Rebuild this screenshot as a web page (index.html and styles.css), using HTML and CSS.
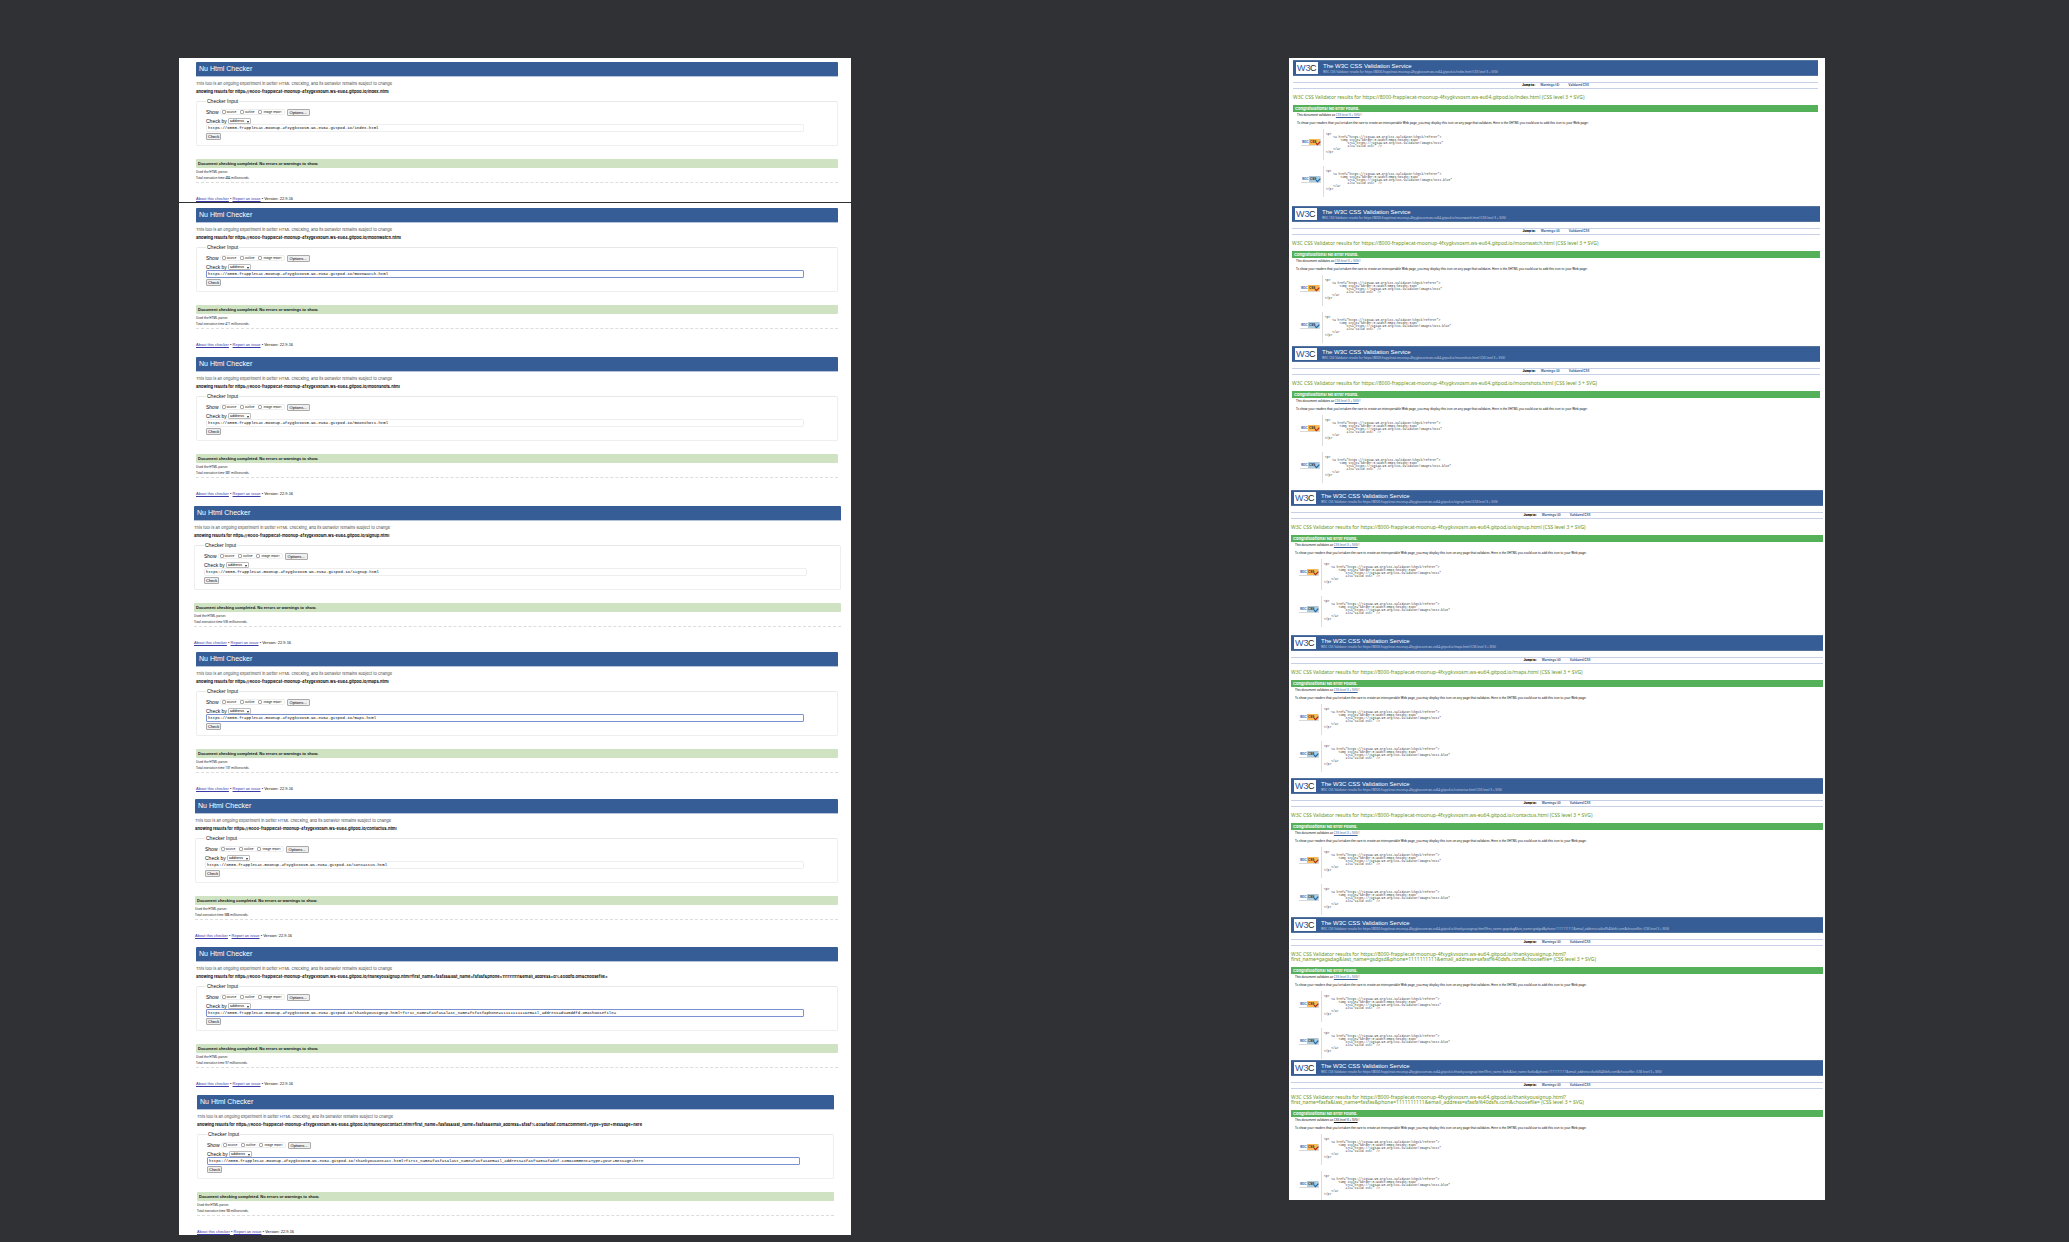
FILE: index.html
```html
<!DOCTYPE html>
<html lang="en">
<head>
<meta charset="utf-8">
<title>Validation results</title>
<link rel="stylesheet" href="styles.css">
</head>
<body>
<svg class="defs" aria-hidden="true">
  <symbol id="w3c" viewBox="0 0 22 12">
    <rect width="22" height="12" fill="#fff"/>
    <text x="1" y="9" class="logo-blue">W3</text>
    <text x="14" y="9" class="logo-dark">C</text>
  </symbol>
  <symbol id="badge-gold" viewBox="0 0 20 7">
    <rect width="20" height="7" fill="#d9d9d9"/>
    <rect width="19" height="6" fill="#fff"/>
    <rect x="8" width="11" height="6" fill="#fdb94f"/>
    <text x="1" y="4" class="badge-w3c">W3C</text>
    <text x="9" y="4" class="badge-css">CSS</text>
    <path d="M15 4.2l1.4 1.5L19.4 2.6" stroke="#b3261a" stroke-width="1.2" fill="none"/>
  </symbol>
  <symbol id="badge-blue" viewBox="0 0 20 7">
    <rect width="20" height="7" fill="#d9d9d9"/>
    <rect width="19" height="6" fill="#fff"/>
    <rect x="8" width="11" height="6" fill="#a9cbe0"/>
    <text x="1" y="4" class="badge-w3c">W3C</text>
    <text x="9" y="4" class="badge-css">CSS</text>
    <path d="M15 4.2l1.4 1.5L19.4 2.6" stroke="#1769ad" stroke-width="1.2" fill="none"/>
  </symbol>
</svg>
<main class="board">
<section class="panel html-panel" aria-label="HTML checks">

<article class="nu ruled">
  <h1>Nu Html Checker</h1>
  <p class="tagline">This tool is an ongoing experiment in better HTML checking, and its behavior remains subject to change</p>
  <h2>Showing results for https://8000-frapplecat-moonup-4fxygkvxosm.ws-eu64.gitpod.io/index.html</h2>
  <fieldset><legend>Checker Input</legend>
    <div class="show">Show <span class="options"><label><input type="checkbox">source</label><label><input type="checkbox">outline</label><label><input type="checkbox">image report</label></span><button type="button">Options...</button></div>
    <div class="by"><label for="by1">Check by</label><span class="picker"><select id="by1"><option>address</option></select></span></div>
    <input class="url" type="text" aria-label="Address" value="https://8000-frapplecat-moonup-4fxygkvxosm.ws-eu64.gitpod.io/index.html">
    <button type="button">Check</button>
  </fieldset>
  <p class="success">Document checking completed. No errors or warnings to show.</p>
  <div class="stats"><p>Used the HTML parser.</p><p>Total execution time 484 milliseconds.</p></div>
  <footer><a href="#about">About this checker</a> • <a href="#issue">Report an issue</a> • Version: 22.9.16</footer>
</article>

<article class="nu after-9">
  <h1>Nu Html Checker</h1>
  <p class="tagline">This tool is an ongoing experiment in better HTML checking, and its behavior remains subject to change</p>
  <h2>Showing results for https://8000-frapplecat-moonup-4fxygkvxosm.ws-eu64.gitpod.io/moonwatch.html</h2>
  <fieldset><legend>Checker Input</legend>
    <div class="show">Show <span class="options"><label><input type="checkbox">source</label><label><input type="checkbox">outline</label><label><input type="checkbox">image report</label></span><button type="button">Options...</button></div>
    <div class="by"><label for="by2">Check by</label><span class="picker"><select id="by2"><option>address</option></select></span></div>
    <input class="url active" type="text" aria-label="Address" value="https://8000-frapplecat-moonup-4fxygkvxosm.ws-eu64.gitpod.io/moonwatch.html">
    <button type="button">Check</button>
  </fieldset>
  <p class="success">Document checking completed. No errors or warnings to show.</p>
  <div class="stats"><p>Used the HTML parser.</p><p>Total execution time 411 milliseconds.</p></div>
  <footer><a href="#about">About this checker</a> • <a href="#issue">Report an issue</a> • Version: 22.9.16</footer>
</article>

<article class="nu after-9">
  <h1>Nu Html Checker</h1>
  <p class="tagline">This tool is an ongoing experiment in better HTML checking, and its behavior remains subject to change</p>
  <h2>Showing results for https://8000-frapplecat-moonup-4fxygkvxosm.ws-eu64.gitpod.io/moonshots.html</h2>
  <fieldset><legend>Checker Input</legend>
    <div class="show">Show <span class="options"><label><input type="checkbox">source</label><label><input type="checkbox">outline</label><label><input type="checkbox">image report</label></span><button type="button">Options...</button></div>
    <div class="by"><label for="by3">Check by</label><span class="picker"><select id="by3"><option>address</option></select></span></div>
    <input class="url" type="text" aria-label="Address" value="https://8000-frapplecat-moonup-4fxygkvxosm.ws-eu64.gitpod.io/moonshots.html">
    <button type="button">Check</button>
  </fieldset>
  <p class="success">Document checking completed. No errors or warnings to show.</p>
  <div class="stats"><p>Used the HTML parser.</p><p>Total execution time 381 milliseconds.</p></div>
  <footer><a href="#about">About this checker</a> • <a href="#issue">Report an issue</a> • Version: 22.9.16</footer>
</article>

<article class="nu wide">
  <h1>Nu Html Checker</h1>
  <p class="tagline">This tool is an ongoing experiment in better HTML checking, and its behavior remains subject to change</p>
  <h2>Showing results for https://8000-frapplecat-moonup-4fxygkvxosm.ws-eu64.gitpod.io/signup.html</h2>
  <fieldset><legend>Checker Input</legend>
    <div class="show">Show <span class="options"><label><input type="checkbox">source</label><label><input type="checkbox">outline</label><label><input type="checkbox">image report</label></span><button type="button">Options...</button></div>
    <div class="by"><label for="by4">Check by</label><span class="picker"><select id="by4"><option>address</option></select></span></div>
    <input class="url" type="text" aria-label="Address" value="https://8000-frapplecat-moonup-4fxygkvxosm.ws-eu64.gitpod.io/signup.html">
    <button type="button">Check</button>
  </fieldset>
  <p class="success">Document checking completed. No errors or warnings to show.</p>
  <div class="stats"><p>Used the HTML parser.</p><p>Total execution time 535 milliseconds.</p></div>
  <footer><a href="#about">About this checker</a> • <a href="#issue">Report an issue</a> • Version: 22.9.16</footer>
</article>

<article class="nu after-7">
  <h1>Nu Html Checker</h1>
  <p class="tagline">This tool is an ongoing experiment in better HTML checking, and its behavior remains subject to change</p>
  <h2>Showing results for https://8000-frapplecat-moonup-4fxygkvxosm.ws-eu64.gitpod.io/maps.html</h2>
  <fieldset><legend>Checker Input</legend>
    <div class="show">Show <span class="options"><label><input type="checkbox">source</label><label><input type="checkbox">outline</label><label><input type="checkbox">image report</label></span><button type="button">Options...</button></div>
    <div class="by"><label for="by5">Check by</label><span class="picker"><select id="by5"><option>address</option></select></span></div>
    <input class="url active" type="text" aria-label="Address" value="https://8000-frapplecat-moonup-4fxygkvxosm.ws-eu64.gitpod.io/maps.html">
    <button type="button">Check</button>
  </fieldset>
  <p class="success">Document checking completed. No errors or warnings to show.</p>
  <div class="stats"><p>Used the HTML parser.</p><p>Total execution time 137 milliseconds.</p></div>
  <footer><a href="#about">About this checker</a> • <a href="#issue">Report an issue</a> • Version: 22.9.16</footer>
</article>

<article class="nu after-8 semi-wide">
  <h1>Nu Html Checker</h1>
  <p class="tagline">This tool is an ongoing experiment in better HTML checking, and its behavior remains subject to change</p>
  <h2>Showing results for https://8000-frapplecat-moonup-4fxygkvxosm.ws-eu64.gitpod.io/contactus.html</h2>
  <fieldset><legend>Checker Input</legend>
    <div class="show">Show <span class="options"><label><input type="checkbox">source</label><label><input type="checkbox">outline</label><label><input type="checkbox">image report</label></span><button type="button">Options...</button></div>
    <div class="by"><label for="by6">Check by</label><span class="picker"><select id="by6"><option>address</option></select></span></div>
    <input class="url" type="text" aria-label="Address" value="https://8000-frapplecat-moonup-4fxygkvxosm.ws-eu64.gitpod.io/contactus.html">
    <button type="button">Check</button>
  </fieldset>
  <p class="success">Document checking completed. No errors or warnings to show.</p>
  <div class="stats"><p>Used the HTML parser.</p><p>Total execution time 388 milliseconds.</p></div>
  <footer><a href="#about">About this checker</a> • <a href="#issue">Report an issue</a> • Version: 22.9.16</footer>
</article>

<article class="nu after-8">
  <h1>Nu Html Checker</h1>
  <p class="tagline">This tool is an ongoing experiment in better HTML checking, and its behavior remains subject to change</p>
  <h2>Showing results for https://8000-frapplecat-moonup-4fxygkvxosm.ws-eu64.gitpod.io/thankyousignup.html?first_name=fasfas&amp;last_name=fsfasf&amp;phone=1111111111&amp;email_address=d%40ddfd.om&amp;choosefile=</h2>
  <fieldset><legend>Checker Input</legend>
    <div class="show">Show <span class="options"><label><input type="checkbox">source</label><label><input type="checkbox">outline</label><label><input type="checkbox">image report</label></span><button type="button">Options...</button></div>
    <div class="by"><label for="by7">Check by</label><span class="picker"><select id="by7"><option>address</option></select></span></div>
    <input class="url active" type="text" aria-label="Address" value="https://8000-frapplecat-moonup-4fxygkvxosm.ws-eu64.gitpod.io/thankyousignup.html?first_name=fasfas&amp;last_name=fsfasf&amp;phone=1111111111&amp;email_address=d%40ddfd.om&amp;choosefile=">
    <button type="button">Check</button>
  </fieldset>
  <p class="success">Document checking completed. No errors or warnings to show.</p>
  <div class="stats"><p>Used the HTML parser.</p><p>Total execution time 97 milliseconds.</p></div>
  <footer><a href="#about">About this checker</a> • <a href="#issue">Report an issue</a> • Version: 22.9.16</footer>
</article>

<article class="nu last narrow">
  <h1>Nu Html Checker</h1>
  <p class="tagline">This tool is an ongoing experiment in better HTML checking, and its behavior remains subject to change</p>
  <h2>Showing results for https://8000-frapplecat-moonup-4fxygkvxosm.ws-eu64.gitpod.io/thankyoucontact.html?first_name=fasfas&amp;last_name=fasfas&amp;email_address=sfasf%40safadsf.com&amp;comment=Type+your+message+here</h2>
  <fieldset><legend>Checker Input</legend>
    <div class="show">Show <span class="options"><label><input type="checkbox">source</label><label><input type="checkbox">outline</label><label><input type="checkbox">image report</label></span><button type="button">Options...</button></div>
    <div class="by"><label for="by8">Check by</label><span class="picker"><select id="by8"><option>address</option></select></span></div>
    <input class="url active" type="text" aria-label="Address" value="https://8000-frapplecat-moonup-4fxygkvxosm.ws-eu64.gitpod.io/thankyoucontact.html?first_name=fasfas&amp;last_name=fasfas&amp;email_address=sfasf%40safadsf.com&amp;comment=Type+your+message+here">
    <button type="button">Check</button>
  </fieldset>
  <p class="success">Document checking completed. No errors or warnings to show.</p>
  <div class="stats"><p>Used the HTML parser.</p><p>Total execution time 98 milliseconds.</p></div>
  <footer><a href="#about">About this checker</a> • <a href="#issue">Report an issue</a> • Version: 22.9.16</footer>
</article>
</section>

<section class="panel css-panel" aria-label="CSS checks">

<article class="css inset after-9">
  <header><svg class="logo" role="img" aria-label="W3C"><use href="#w3c"/></svg><div><h1>The W3C CSS Validation Service</h1><p>W3C CSS Validator results for https://8000-frapplecat-moonup-4fxygkvxosm.ws-eu64.gitpod.io/index.html (CSS level 3 + SVG)</p></div></header>
  <nav><b>Jump to:</b><a href="#warnings">Warnings (4)</a><a href="#css">Validated CSS</a></nav>
  <h2>W3C CSS Validator results for https://8000-frapplecat-moonup-4fxygkvxosm.ws-eu64.gitpod.io/index.html (CSS level 3 + SVG)</h2>
  <h3>Congratulations! No Error Found.</h3>
  <p class="note">This document validates as <a href="#level">CSS level 3 + SVG</a> !</p>
  <p class="note intro">To show your readers that you've taken the care to create an interoperable Web page, you may display this icon on any page that validates. Here is the XHTML you could use to add this icon to your Web page:</p>
  <div class="snippet"><svg class="badge" role="img" aria-label="Valid CSS"><use href="#badge-gold"/></svg><pre>&lt;p&gt;
    &lt;a href="https://jigsaw.w3.org/css-validator/check/referer"&gt;
        &lt;img style="border:0;width:88px;height:31px"
            src="https://jigsaw.w3.org/css-validator/images/vcss"
            alt="Valid CSS!" /&gt;
    &lt;/a&gt;
&lt;/p&gt;</pre></div>
  <div class="snippet"><svg class="badge" role="img" aria-label="Valid CSS"><use href="#badge-blue"/></svg><pre>&lt;p&gt;
    &lt;a href="https://jigsaw.w3.org/css-validator/check/referer"&gt;
        &lt;img style="border:0;width:88px;height:31px"
            src="https://jigsaw.w3.org/css-validator/images/vcss-blue"
            alt="Valid CSS!" /&gt;
    &lt;/a&gt;
&lt;/p&gt;</pre></div>
</article>

<article class="css semi-inset after-3">
  <header><svg class="logo" role="img" aria-label="W3C"><use href="#w3c"/></svg><div><h1>The W3C CSS Validation Service</h1><p>W3C CSS Validator results for https://8000-frapplecat-moonup-4fxygkvxosm.ws-eu64.gitpod.io/moonwatch.html (CSS level 3 + SVG)</p></div></header>
  <nav><b>Jump to:</b><a href="#warnings">Warnings (4)</a><a href="#css">Validated CSS</a></nav>
  <h2>W3C CSS Validator results for https://8000-frapplecat-moonup-4fxygkvxosm.ws-eu64.gitpod.io/moonwatch.html (CSS level 3 + SVG)</h2>
  <h3>Congratulations! No Error Found.</h3>
  <p class="note">This document validates as <a href="#level">CSS level 3 + SVG</a> !</p>
  <p class="note intro">To show your readers that you've taken the care to create an interoperable Web page, you may display this icon on any page that validates. Here is the XHTML you could use to add this icon to your Web page:</p>
  <div class="snippet"><svg class="badge" role="img" aria-label="Valid CSS"><use href="#badge-gold"/></svg><pre>&lt;p&gt;
    &lt;a href="https://jigsaw.w3.org/css-validator/check/referer"&gt;
        &lt;img style="border:0;width:88px;height:31px"
            src="https://jigsaw.w3.org/css-validator/images/vcss"
            alt="Valid CSS!" /&gt;
    &lt;/a&gt;
&lt;/p&gt;</pre></div>
  <div class="snippet"><svg class="badge" role="img" aria-label="Valid CSS"><use href="#badge-blue"/></svg><pre>&lt;p&gt;
    &lt;a href="https://jigsaw.w3.org/css-validator/check/referer"&gt;
        &lt;img style="border:0;width:88px;height:31px"
            src="https://jigsaw.w3.org/css-validator/images/vcss-blue"
            alt="Valid CSS!" /&gt;
    &lt;/a&gt;
&lt;/p&gt;</pre></div>
</article>

<article class="css semi-inset after-7">
  <header><svg class="logo" role="img" aria-label="W3C"><use href="#w3c"/></svg><div><h1>The W3C CSS Validation Service</h1><p>W3C CSS Validator results for https://8000-frapplecat-moonup-4fxygkvxosm.ws-eu64.gitpod.io/moonshots.html (CSS level 3 + SVG)</p></div></header>
  <nav><b>Jump to:</b><a href="#warnings">Warnings (4)</a><a href="#css">Validated CSS</a></nav>
  <h2>W3C CSS Validator results for https://8000-frapplecat-moonup-4fxygkvxosm.ws-eu64.gitpod.io/moonshots.html (CSS level 3 + SVG)</h2>
  <h3>Congratulations! No Error Found.</h3>
  <p class="note">This document validates as <a href="#level">CSS level 3 + SVG</a> !</p>
  <p class="note intro">To show your readers that you've taken the care to create an interoperable Web page, you may display this icon on any page that validates. Here is the XHTML you could use to add this icon to your Web page:</p>
  <div class="snippet"><svg class="badge" role="img" aria-label="Valid CSS"><use href="#badge-gold"/></svg><pre>&lt;p&gt;
    &lt;a href="https://jigsaw.w3.org/css-validator/check/referer"&gt;
        &lt;img style="border:0;width:88px;height:31px"
            src="https://jigsaw.w3.org/css-validator/images/vcss"
            alt="Valid CSS!" /&gt;
    &lt;/a&gt;
&lt;/p&gt;</pre></div>
  <div class="snippet"><svg class="badge" role="img" aria-label="Valid CSS"><use href="#badge-blue"/></svg><pre>&lt;p&gt;
    &lt;a href="https://jigsaw.w3.org/css-validator/check/referer"&gt;
        &lt;img style="border:0;width:88px;height:31px"
            src="https://jigsaw.w3.org/css-validator/images/vcss-blue"
            alt="Valid CSS!" /&gt;
    &lt;/a&gt;
&lt;/p&gt;</pre></div>
</article>

<article class="css after-8">
  <header><svg class="logo" role="img" aria-label="W3C"><use href="#w3c"/></svg><div><h1>The W3C CSS Validation Service</h1><p>W3C CSS Validator results for https://8000-frapplecat-moonup-4fxygkvxosm.ws-eu64.gitpod.io/signup.html (CSS level 3 + SVG)</p></div></header>
  <nav><b>Jump to:</b><a href="#warnings">Warnings (4)</a><a href="#css">Validated CSS</a></nav>
  <h2>W3C CSS Validator results for https://8000-frapplecat-moonup-4fxygkvxosm.ws-eu64.gitpod.io/signup.html (CSS level 3 + SVG)</h2>
  <h3>Congratulations! No Error Found.</h3>
  <p class="note">This document validates as <a href="#level">CSS level 3 + SVG</a> !</p>
  <p class="note intro">To show your readers that you've taken the care to create an interoperable Web page, you may display this icon on any page that validates. Here is the XHTML you could use to add this icon to your Web page:</p>
  <div class="snippet"><svg class="badge" role="img" aria-label="Valid CSS"><use href="#badge-gold"/></svg><pre>&lt;p&gt;
    &lt;a href="https://jigsaw.w3.org/css-validator/check/referer"&gt;
        &lt;img style="border:0;width:88px;height:31px"
            src="https://jigsaw.w3.org/css-validator/images/vcss"
            alt="Valid CSS!" /&gt;
    &lt;/a&gt;
&lt;/p&gt;</pre></div>
  <div class="snippet"><svg class="badge" role="img" aria-label="Valid CSS"><use href="#badge-blue"/></svg><pre>&lt;p&gt;
    &lt;a href="https://jigsaw.w3.org/css-validator/check/referer"&gt;
        &lt;img style="border:0;width:88px;height:31px"
            src="https://jigsaw.w3.org/css-validator/images/vcss-blue"
            alt="Valid CSS!" /&gt;
    &lt;/a&gt;
&lt;/p&gt;</pre></div>
</article>

<article class="css">
  <header><svg class="logo" role="img" aria-label="W3C"><use href="#w3c"/></svg><div><h1>The W3C CSS Validation Service</h1><p>W3C CSS Validator results for https://8000-frapplecat-moonup-4fxygkvxosm.ws-eu64.gitpod.io/maps.html (CSS level 3 + SVG)</p></div></header>
  <nav><b>Jump to:</b><a href="#warnings">Warnings (4)</a><a href="#css">Validated CSS</a></nav>
  <h2>W3C CSS Validator results for https://8000-frapplecat-moonup-4fxygkvxosm.ws-eu64.gitpod.io/maps.html (CSS level 3 + SVG)</h2>
  <h3>Congratulations! No Error Found.</h3>
  <p class="note">This document validates as <a href="#level">CSS level 3 + SVG</a> !</p>
  <p class="note intro">To show your readers that you've taken the care to create an interoperable Web page, you may display this icon on any page that validates. Here is the XHTML you could use to add this icon to your Web page:</p>
  <div class="snippet"><svg class="badge" role="img" aria-label="Valid CSS"><use href="#badge-gold"/></svg><pre>&lt;p&gt;
    &lt;a href="https://jigsaw.w3.org/css-validator/check/referer"&gt;
        &lt;img style="border:0;width:88px;height:31px"
            src="https://jigsaw.w3.org/css-validator/images/vcss"
            alt="Valid CSS!" /&gt;
    &lt;/a&gt;
&lt;/p&gt;</pre></div>
  <div class="snippet"><svg class="badge" role="img" aria-label="Valid CSS"><use href="#badge-blue"/></svg><pre>&lt;p&gt;
    &lt;a href="https://jigsaw.w3.org/css-validator/check/referer"&gt;
        &lt;img style="border:0;width:88px;height:31px"
            src="https://jigsaw.w3.org/css-validator/images/vcss-blue"
            alt="Valid CSS!" /&gt;
    &lt;/a&gt;
&lt;/p&gt;</pre></div>
</article>

<article class="css after-2">
  <header><svg class="logo" role="img" aria-label="W3C"><use href="#w3c"/></svg><div><h1>The W3C CSS Validation Service</h1><p>W3C CSS Validator results for https://8000-frapplecat-moonup-4fxygkvxosm.ws-eu64.gitpod.io/contactus.html (CSS level 3 + SVG)</p></div></header>
  <nav><b>Jump to:</b><a href="#warnings">Warnings (4)</a><a href="#css">Validated CSS</a></nav>
  <h2>W3C CSS Validator results for https://8000-frapplecat-moonup-4fxygkvxosm.ws-eu64.gitpod.io/contactus.html (CSS level 3 + SVG)</h2>
  <h3>Congratulations! No Error Found.</h3>
  <p class="note">This document validates as <a href="#level">CSS level 3 + SVG</a> !</p>
  <p class="note intro">To show your readers that you've taken the care to create an interoperable Web page, you may display this icon on any page that validates. Here is the XHTML you could use to add this icon to your Web page:</p>
  <div class="snippet"><svg class="badge" role="img" aria-label="Valid CSS"><use href="#badge-gold"/></svg><pre>&lt;p&gt;
    &lt;a href="https://jigsaw.w3.org/css-validator/check/referer"&gt;
        &lt;img style="border:0;width:88px;height:31px"
            src="https://jigsaw.w3.org/css-validator/images/vcss"
            alt="Valid CSS!" /&gt;
    &lt;/a&gt;
&lt;/p&gt;</pre></div>
  <div class="snippet"><svg class="badge" role="img" aria-label="Valid CSS"><use href="#badge-blue"/></svg><pre>&lt;p&gt;
    &lt;a href="https://jigsaw.w3.org/css-validator/check/referer"&gt;
        &lt;img style="border:0;width:88px;height:31px"
            src="https://jigsaw.w3.org/css-validator/images/vcss-blue"
            alt="Valid CSS!" /&gt;
    &lt;/a&gt;
&lt;/p&gt;</pre></div>
</article>

<article class="css after-1">
  <header><svg class="logo" role="img" aria-label="W3C"><use href="#w3c"/></svg><div><h1>The W3C CSS Validation Service</h1><p>W3C CSS Validator results for https://8000-frapplecat-moonup-4fxygkvxosm.ws-eu64.gitpod.io/thankyousignup.html?first_name=gagsdag&amp;last_name=gsdgsd&amp;phone=1111111111&amp;email_address=safasf%40dsfs.com&amp;choosefile= (CSS level 3 + SVG)</p></div></header>
  <nav><b>Jump to:</b><a href="#warnings">Warnings (4)</a><a href="#css">Validated CSS</a></nav>
  <h2>W3C CSS Validator results for https://8000-frapplecat-moonup-4fxygkvxosm.ws-eu64.gitpod.io/thankyousignup.html?<br>first_name=gagsdag&amp;last_name=gsdgsd&amp;phone=1111111111&amp;email_address=safasf%40dsfs.com&amp;choosefile= (CSS level 3 + SVG)</h2>
  <h3>Congratulations! No Error Found.</h3>
  <p class="note">This document validates as <a href="#level">CSS level 3 + SVG</a> !</p>
  <p class="note intro">To show your readers that you've taken the care to create an interoperable Web page, you may display this icon on any page that validates. Here is the XHTML you could use to add this icon to your Web page:</p>
  <div class="snippet"><svg class="badge" role="img" aria-label="Valid CSS"><use href="#badge-gold"/></svg><pre>&lt;p&gt;
    &lt;a href="https://jigsaw.w3.org/css-validator/check/referer"&gt;
        &lt;img style="border:0;width:88px;height:31px"
            src="https://jigsaw.w3.org/css-validator/images/vcss"
            alt="Valid CSS!" /&gt;
    &lt;/a&gt;
&lt;/p&gt;</pre></div>
  <div class="snippet"><svg class="badge" role="img" aria-label="Valid CSS"><use href="#badge-blue"/></svg><pre>&lt;p&gt;
    &lt;a href="https://jigsaw.w3.org/css-validator/check/referer"&gt;
        &lt;img style="border:0;width:88px;height:31px"
            src="https://jigsaw.w3.org/css-validator/images/vcss-blue"
            alt="Valid CSS!" /&gt;
    &lt;/a&gt;
&lt;/p&gt;</pre></div>
</article>

<article class="css last">
  <header><svg class="logo" role="img" aria-label="W3C"><use href="#w3c"/></svg><div><h1>The W3C CSS Validation Service</h1><p>W3C CSS Validator results for https://8000-frapplecat-moonup-4fxygkvxosm.ws-eu64.gitpod.io/thankyousignup.html?first_name=fasfa&amp;last_name=fasfas&amp;phone=1111111111&amp;email_address=sfasfa%40dsfs.com&amp;choosefile= (CSS level 3 + SVG)</p></div></header>
  <nav><b>Jump to:</b><a href="#warnings">Warnings (4)</a><a href="#css">Validated CSS</a></nav>
  <h2>W3C CSS Validator results for https://8000-frapplecat-moonup-4fxygkvxosm.ws-eu64.gitpod.io/thankyousignup.html?<br>first_name=fasfa&amp;last_name=fasfas&amp;phone=1111111111&amp;email_address=sfasfa%40dsfs.com&amp;choosefile= (CSS level 3 + SVG)</h2>
  <h3>Congratulations! No Error Found.</h3>
  <p class="note">This document validates as <a class="hovered" href="#level">CSS level 3 + SVG</a> !</p>
  <p class="note intro">To show your readers that you've taken the care to create an interoperable Web page, you may display this icon on any page that validates. Here is the XHTML you could use to add this icon to your Web page:</p>
  <div class="snippet"><svg class="badge" role="img" aria-label="Valid CSS"><use href="#badge-gold"/></svg><pre>&lt;p&gt;
    &lt;a href="https://jigsaw.w3.org/css-validator/check/referer"&gt;
        &lt;img style="border:0;width:88px;height:31px"
            src="https://jigsaw.w3.org/css-validator/images/vcss"
            alt="Valid CSS!" /&gt;
    &lt;/a&gt;
&lt;/p&gt;</pre></div>
  <div class="snippet"><svg class="badge" role="img" aria-label="Valid CSS"><use href="#badge-blue"/></svg><pre>&lt;p&gt;
    &lt;a href="https://jigsaw.w3.org/css-validator/check/referer"&gt;
        &lt;img style="border:0;width:88px;height:31px"
            src="https://jigsaw.w3.org/css-validator/images/vcss-blue"
            alt="Valid CSS!" /&gt;
    &lt;/a&gt;
&lt;/p&gt;</pre></div>
</article>
</section>
</main>
</body>
</html>
```
FILE: styles.css
```css
* { box-sizing: border-box; margin: 0; padding: 0; }

body {
  background: #303135;
  color: #111;
  font: 4px/6px "Liberation Sans", Arial, sans-serif;
}

.defs { display: none; }

.board {
  display: grid;
  grid-template-columns: 179fr 672fr 438fr 536fr 244fr;
  align-items: start;
  padding: 58px 0 7px;
}

.panel { background: #fff; white-space: nowrap; }
.html-panel { grid-column: 2; padding-top: 4px; }
.css-panel { grid-column: 4; padding-top: 2px; }

/* Nu Html Checker reports */
.nu { padding: 0 13px 6px 17px; }
.nu.ruled { padding-bottom: 5px; }
.nu.wide { padding-left: 15px; padding-right: 10px; }
.nu.semi-wide { padding-left: 16px; }
.nu.narrow { padding-left: 18px; padding-right: 17px; }
.nu.after-7 { padding-bottom: 7px; }
.nu.after-8 { padding-bottom: 8px; }
.nu.after-9 { padding-bottom: 9px; }
.nu.last { padding-bottom: 0; }

.nu h1 {
  padding-left: 3px;
  border-bottom: 1px solid #b4c3da;
  border-radius: 1px;
  background: #365d95;
  color: #fff;
  font-size: 7px;
  font-weight: 400;
  line-height: 14px;
}

.nu .tagline { margin-top: 3px; color: #444; font: 4px/8px Inter, sans-serif; }
.nu h2 { font: 700 4px/8px Inter, sans-serif; }

.nu fieldset {
  margin-top: 2px;
  padding: 4px 33px 5px 9px;
  border: 1px solid #eee;
  border-top-color: #e8e8e8;
  border-radius: 2px;
}
.nu legend { padding: 0 1px; font-size: 5px; line-height: 6px; }

.show, .by { display: flex; align-items: center; font-size: 5px; }
.show { height: 8px; gap: 1px; }
.by { height: 7px; margin-top: 1px; gap: 1px; }

.options {
  display: flex;
  justify-content: space-between;
  width: 65px;
  padding: 0 2px 0 1px;
  border: 1px solid #eee;
  border-radius: 2px;
  font: 3px/4px Inter, sans-serif;
}
.options label { display: flex; align-items: center; gap: 1px; }
.options input {
  appearance: none;
  width: 4px;
  height: 4px;
  border: 1px solid #aaa;
  border-radius: 1px;
}

button {
  display: block;
  height: 7px;
  padding: 0 2px;
  border: 1px solid #aaa;
  border-radius: 1px;
  background: #efefef;
  color: #000;
  font: 4px/5px "Liberation Sans", Arial, sans-serif;
}
.show button { margin-left: 1px; }
fieldset > button { margin-top: 1px; padding: 0 1px; }

.picker { position: relative; }
.picker::after {
  content: "";
  position: absolute;
  top: 3px;
  right: 2px;
  border: 1px solid transparent;
  border-top: 2px solid #222;
  border-bottom: 0;
}
select {
  appearance: none;
  display: block;
  width: 23px;
  height: 6px;
  padding-left: 1px;
  border: 1px solid #bbb;
  border-radius: 1px;
  background: #fff;
  color: #000;
  font: 4px/4px "Liberation Sans", Arial, sans-serif;
}

.url {
  display: block;
  width: 100%;
  height: 8px;
  padding: 0 1px;
  border: 1px solid #eee;
  border-radius: 2px;
  background: #fff;
  color: #000;
  font: 4px/6px "Liberation Mono", "Courier New", monospace;
}
.url.active { border-color: #7c90cf; border-radius: 1px; }

.success {
  margin-top: 13px;
  padding-left: 2px;
  border-radius: 1px;
  background: #cfe3c3;
  font-weight: 700;
  line-height: 9px;
}
.stats {
  margin-top: 1px;
  padding-bottom: 1px;
  border-bottom: 1px dashed #ddd;
  font: 3px/6px "Noto Sans", sans-serif;
}
.nu footer { margin-top: 12px; line-height: 7px; }
.nu a { color: #3a3aa8; }
.ruled { position: relative; }
.ruled footer { margin-bottom: 1px; }

/* hairline that separates the first capture from the rest */
.ruled::after {
  content: "";
  position: absolute;
  left: 0;
  right: 0;
  bottom: 5px;
  border-bottom: 1px solid #303135;
}

/* W3C CSS Validation Service reports */
.css { padding: 0 2px 6px; }
.css.inset { padding-left: 4px; padding-right: 7px; }
.css.semi-inset { padding-left: 3px; padding-right: 5px; }
.css.after-1 { padding-bottom: 1px; }
.css.after-2 { padding-bottom: 2px; }
.css.after-3 { padding-bottom: 3px; }
.css.after-7 { padding-bottom: 7px; }
.css.after-8 { padding-bottom: 8px; }
.css.after-9 { padding-bottom: 9px; }
.css.last { padding-bottom: 0; }

.css header {
  display: flex;
  align-items: center;
  gap: 5px;
  height: 16px;
  padding-left: 3px;
  border: 1px solid #54739f;
  border-width: 1px 0;
  background: #365d95;
  color: #fff;
}
.logo { width: 22px; height: 12px; }
.logo-blue, .logo-dark { font: 9px "Liberation Sans", Arial, sans-serif; }
.logo-blue { fill: #1f55a5; }
.logo-dark { fill: #222; }
.css h1 { font-size: 6px; font-weight: 400; line-height: 8px; }
.css header p { color: #c3d0e4; font: 3px/5px "Noto Sans", sans-serif; }

.css nav {
  display: flex;
  justify-content: center;
  margin-top: 6px;
  border: 1px solid #c8d0e8;
  border-width: 1px 0;
  font: 700 3px/5px Inter, sans-serif;
}
.css nav a { margin-left: 5px; color: #365d95; text-decoration: none; }
.css nav a + a { margin-left: 9px; }

.css h2 {
  margin: 6px 0 5px;
  color: #6b961c;
  font: 5px/5px "Noto Sans", Verdana, sans-serif;
}
.css h3 {
  padding-left: 2px;
  background: #55b05a;
  color: #fff;
  font: 700 4px/7px Inter, sans-serif;
}
.note { margin: 1px 0 0 4px; color: #000; font: 3px/5px "Noto Sans", sans-serif; }
.note a { color: #365d95; }
.note .hovered { color: #111; }
.note.intro { margin-top: 3px; margin-bottom: 3px; }

.snippet { display: flex; gap: 2px; padding-left: 8px; }
.snippet + .snippet { margin-top: 6px; }
.badge { width: 20px; height: 7px; margin-top: 10px; }
.badge-w3c { fill: #1f55a5; font: 700 3px "Liberation Sans", Arial, sans-serif; }
.badge-css { fill: #222; font: 700 3px "Liberation Sans", Arial, sans-serif; }
.snippet pre {
  padding: 4px 0 6px 2px;
  border-left: 1px solid #ddd;
  color: #333;
  font: 3px/3px "Liberation Mono", "Courier New", monospace;
}
.last .snippet:last-child pre { padding-bottom: 4px; }
```
